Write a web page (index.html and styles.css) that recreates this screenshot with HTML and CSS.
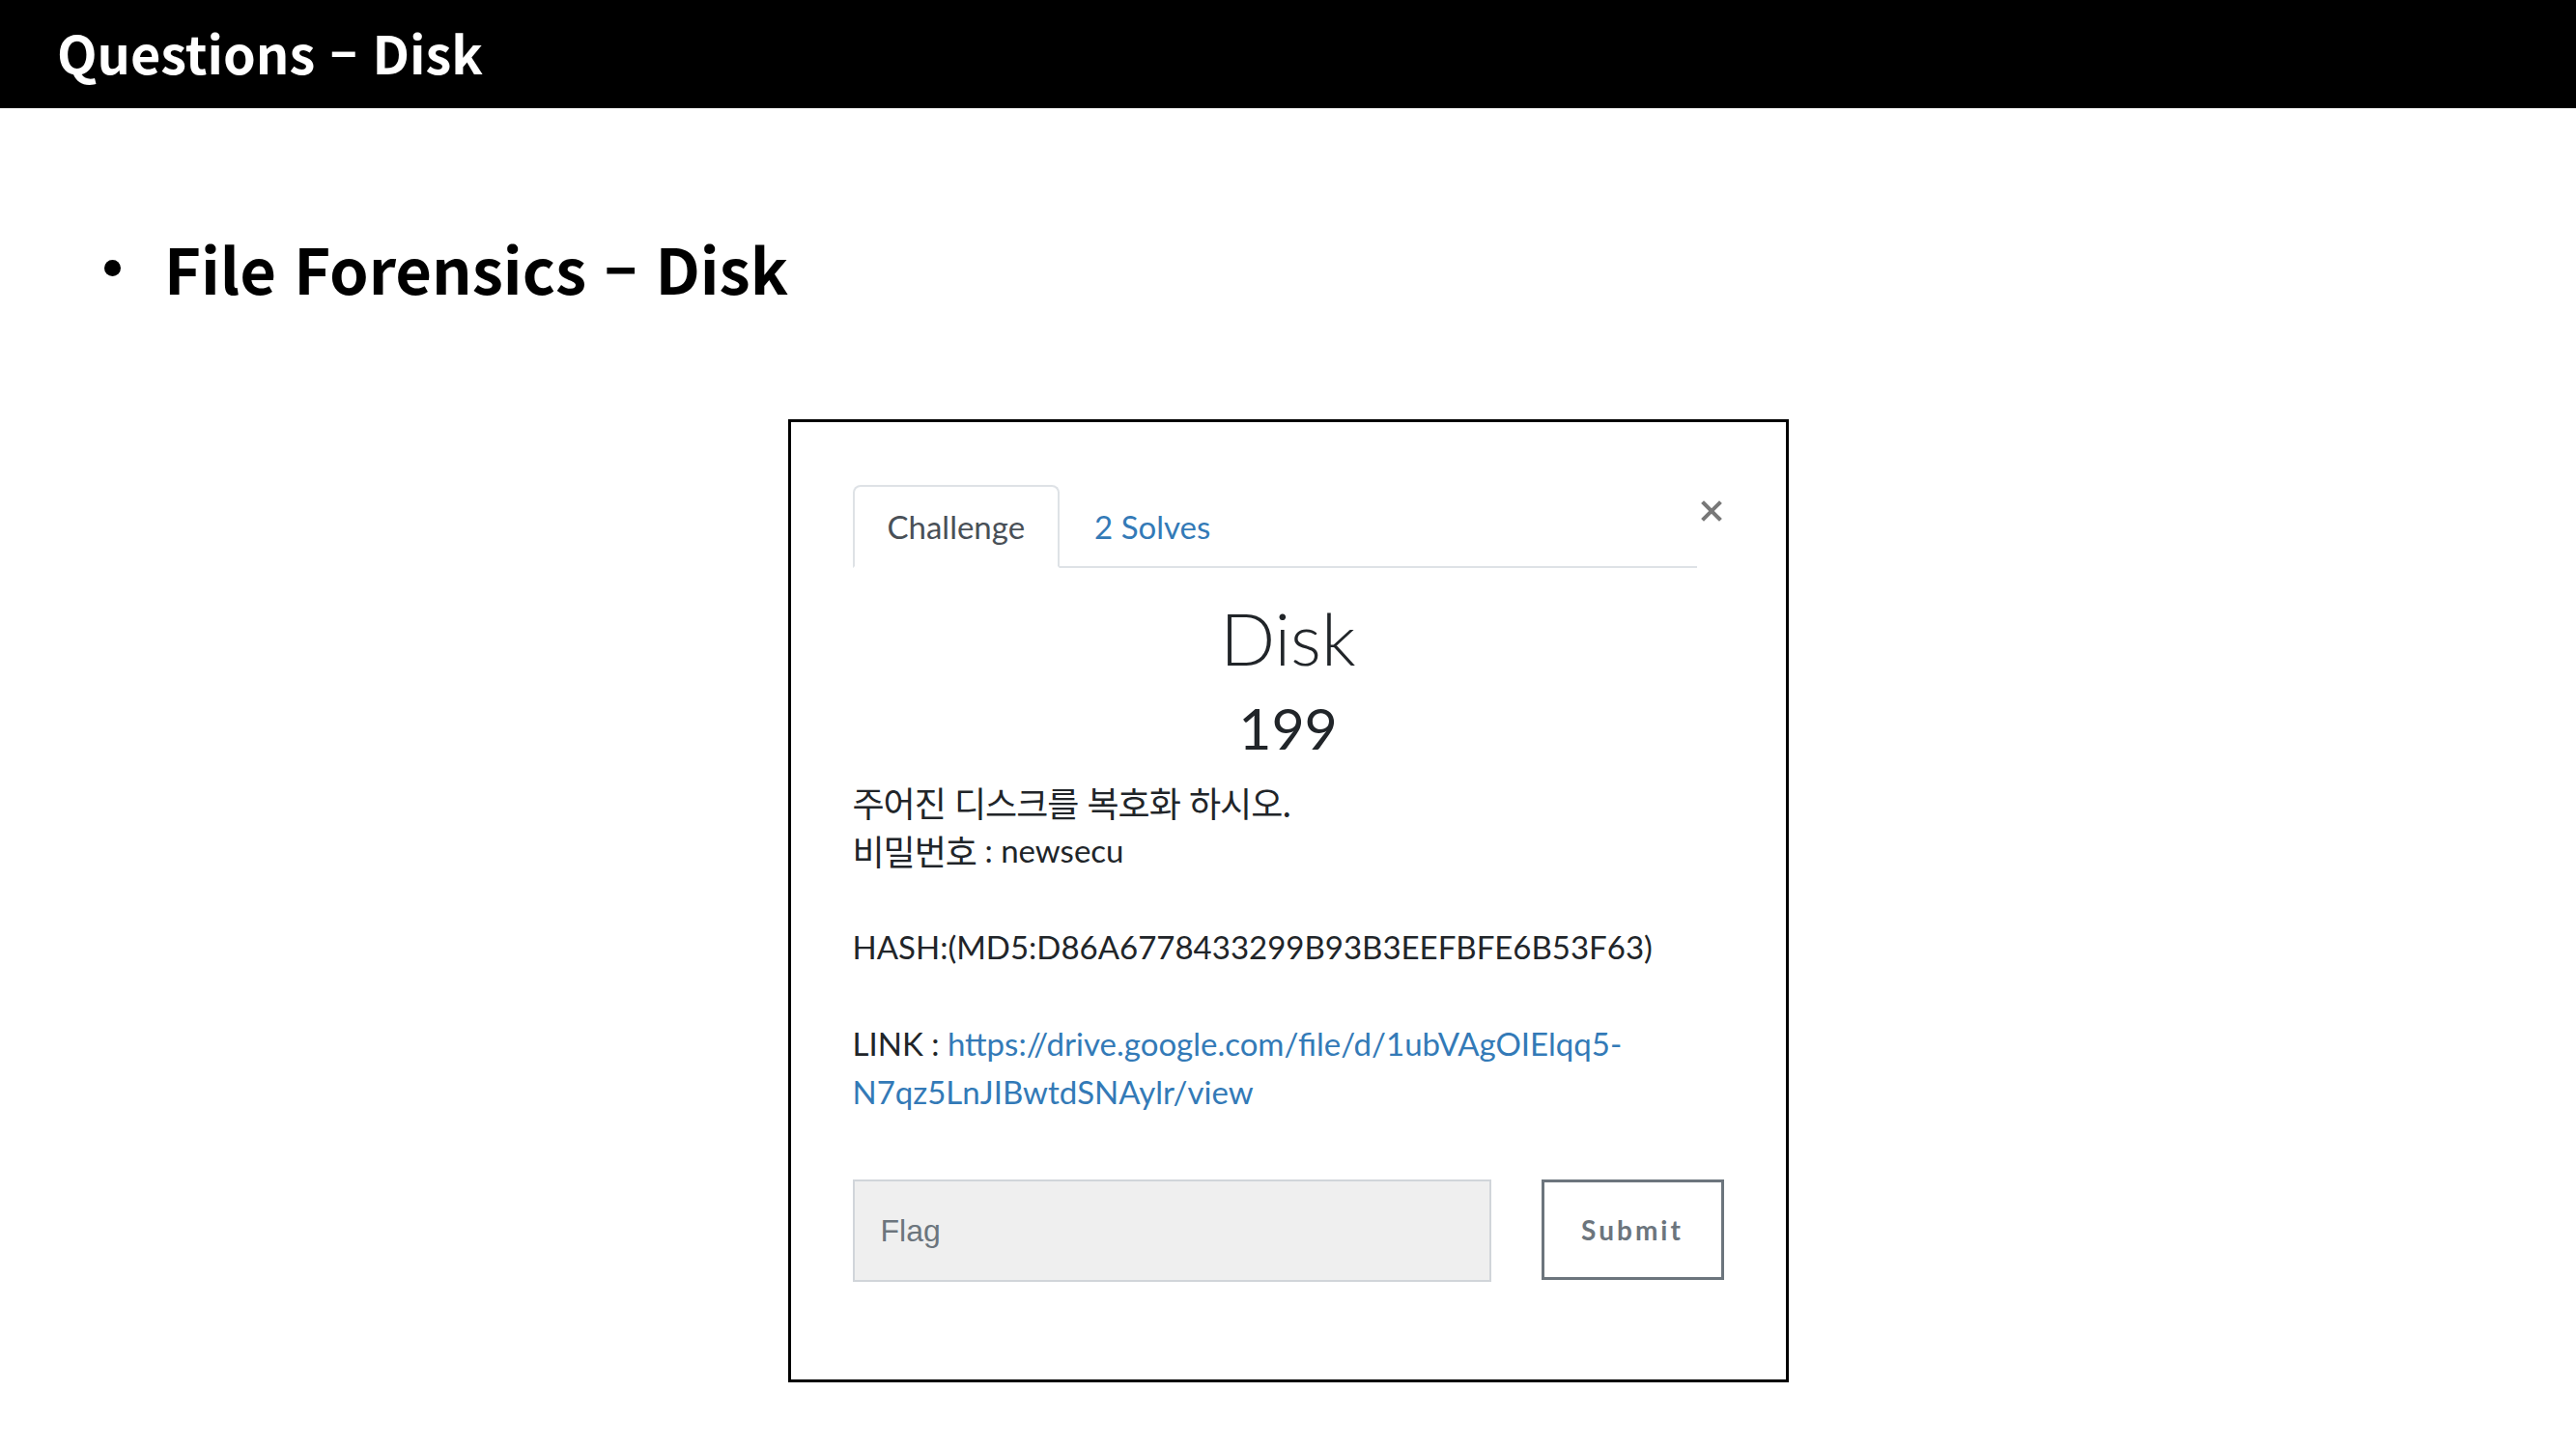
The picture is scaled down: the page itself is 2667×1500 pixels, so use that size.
FILE: index.html
```html
<!DOCTYPE html>
<html lang="ko">
<head>
<meta charset="UTF-8">
<meta name="viewport" content="width=device-width, initial-scale=1.0">
<title>Questions - Disk</title>
<link rel="stylesheet" href="styles.css">
</head>
<body>
<div class="topbar">
    <div class="topbar-title">Questions – Disk</div>
</div>

<div class="bullet-line">
    <span class="bullet-dot"></span>
    <span class="bullet-text">File Forensics – Disk</span>
</div>

<div class="modal">
    <div class="modal-head">
        <ul class="tabs">
            <li class="tab tab-active">Challenge</li>
            <li class="tab tab-link">2 Solves</li>
        </ul>
        <div class="close-btn">
            <svg width="22" height="22" viewBox="0 0 22 22">
                <path d="M3 3 L19 19 M19 3 L3 19" stroke="#787878" stroke-width="4" stroke-linecap="square"/>
            </svg>
        </div>
    </div>

    <h3 class="chal-name">Disk</h3>
    <h4 class="chal-value">199</h4>

    <div class="chal-desc">
        <p><span class="ko">주어진 디스크를 복호화 하시오.</span><br><span class="ko">비밀번호</span> : newsecu</p>
        <p>HASH:(MD5:D86A6778433299B93B3EEFBFE6B53F63)</p>
        <p class="last">LINK : <a href="#">https://drive.google.com/file/d/1ubVAgOIElqq5-<br>N7qz5LnJIBwtdSNAylr/view</a></p>
    </div>

    <form class="flag-form">
        <input type="text" class="flag-input" placeholder="Flag">
        <button type="button" class="submit-btn">Submit</button>
    </form>
</div>
</body>
</html>
```

FILE: styles.css
```css
body {
    margin: 0;
    padding: 0;
    background-color: #ffffff;
    font-family: "Noto Sans CJK KR", sans-serif;
}

.topbar {
    height: 112px;
    background-color: #000000;
    display: flex;
    align-items: center;
    padding-left: 59px;
}

.topbar-title {
    color: #ffffff;
    font-size: 54px;
    font-weight: 700;
    line-height: 70px;
    margin-top: -4px;
}

.bullet-line {
    margin-top: 110px;
    height: 110px;
    display: flex;
    align-items: center;
    padding-left: 108px;
}

.bullet-dot {
    width: 17px;
    height: 17px;
    border-radius: 50%;
    background-color: #000000;
    margin-right: 45px;
}

.bullet-text {
    font-size: 65px;
    font-weight: 700;
    line-height: 90px;
    color: #000000;
}

/* modal da challenge */
.modal {
    width: 1036px;
    height: 997px;
    box-sizing: border-box;
    margin: 102px auto 0;
    border: 3px solid #000000;
    padding: 65px 64px;
    font-family: Lato, "Noto Sans CJK KR", sans-serif;
    color: #212529;
}

.modal-head {
    display: flex;
    align-items: flex-start;
}

.tabs {
    list-style: none;
    margin: 0;
    padding: 0;
    width: 874px;
    display: flex;
    border-bottom: 2px solid #dee2e6;
}

.tab {
    font-size: 33px;
    line-height: 50px;
    padding: 16px 34px;
    border: 2px solid transparent;
    border-radius: 8px 8px 0 0;
    margin-bottom: -2px;
}

.tab-active {
    color: #495057;
    border-color: #dee2e6 #dee2e6 #ffffff;
    background-color: #ffffff;
}

.tab-link {
    color: #337ab7;
}

.close-btn {
    margin-left: 4px;
    margin-top: 16px;
    width: 22px;
    height: 22px;
}

.chal-name {
    margin: 33px 0 0;
    text-align: center;
    font-size: 75px;
    font-weight: 300;
    line-height: 78px;
    color: #212529;
}

.chal-value {
    margin: 20px 0 0;
    text-align: center;
    font-size: 59px;
    font-weight: 400;
    line-height: 70px;
    color: #212529;
}

.chal-desc {
    margin-top: 16px;
    font-size: 33px;
    line-height: 50px;
}

.chal-desc p {
    margin: 0 0 50px;
}

.chal-desc p.last {
    margin-bottom: 0;
}

.chal-desc a {
    color: #337ab7;
    text-decoration: none;
}

.ko {
    font-family: "Noto Sans CJK KR", sans-serif;
    font-size: 36px;
    line-height: 1;
    letter-spacing: -1px;
    position: relative;
    top: 3px;
}

.flag-form {
    margin-top: 66px;
    display: grid;
    grid-template-columns: 661px 189px;
    column-gap: 52px;
    align-items: start;
}

.flag-input {
    height: 106px;
    box-sizing: border-box;
    background-color: #efefef;
    border: 2px solid #d1d5da;
    padding: 0 0 0 27px;
    font-family: "Liberation Sans", sans-serif;
    font-size: 32px;
    color: #495057;
    outline: none;
}

.flag-input::placeholder {
    color: #6c757d;
}

.submit-btn {
    height: 104px;
    box-sizing: border-box;
    background-color: #ffffff;
    border: 3px solid #6c757d;
    font-family: Lato, sans-serif;
    font-size: 28px;
    font-weight: 700;
    letter-spacing: 3px;
    color: #6c757d;
    cursor: pointer;
}
```
